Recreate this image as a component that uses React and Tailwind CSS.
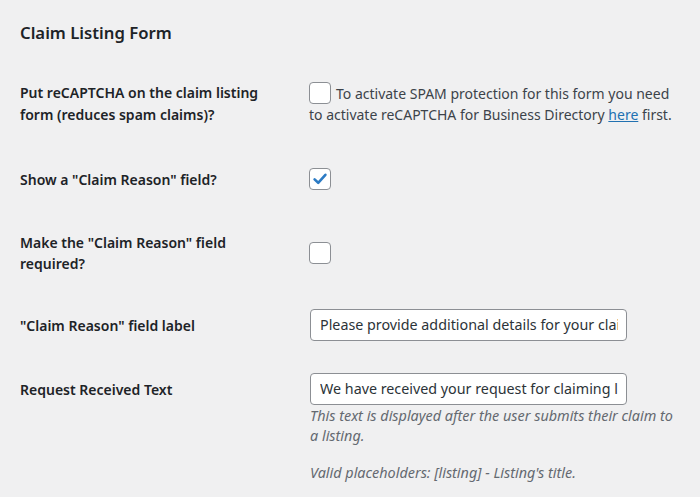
import React from "react";

const font = { fontFamily: '"Noto Sans", "Open Sans", sans-serif' };

function Box({ checked }) {
  return (
    <span className="inline-flex h-[22px] w-[22px] shrink-0 items-center justify-center rounded-[4px] border border-[#8c8f94] bg-white">
      {checked && (
        <svg width="16" height="16" viewBox="0 0 16 16">
          <path d="M2.6 8.4 L6.2 11.8 L13.4 3.8" fill="none" stroke="#2c7bc4" strokeWidth="2.6" strokeLinecap="round" strokeLinejoin="round" />
        </svg>
      )}
    </span>
  );
}

export default function App() {
  return (
    <div className="min-h-[497px] w-[700px] overflow-hidden bg-[#f0f0f1] pl-[20px] pt-[21px] text-[14px] text-[#1d2327]" style={font}>
      <h2 className="h-[24px] text-[16.7px] font-semibold leading-[24px] text-[#1d2327]">Claim Listing Form</h2>

      <div className="mt-[17px] flex h-[82px]">
        <div className="w-[280px] shrink-0 pr-[10px] pt-[20px] font-semibold leading-[21.5px] whitespace-nowrap">
          <div>Put reCAPTCHA on the claim listing</div>
          <div>form (reduces spam claims)?</div>
        </div>
        <div className="flex-1 pl-[9px] pt-[20px] text-[#3c434a] whitespace-nowrap">
          <div className="flex h-[22px] items-center gap-[5px]">
            <Box />
            <span>To activate SPAM protection for this form you need</span>
          </div>
          <div className="leading-[22px]">
            to activate reCAPTCHA for Business Directory{" "}
            <a className="text-[#2271b1] underline">here</a> first.
          </div>
        </div>
      </div>

      <div className="flex h-[68px]">
        <div className="w-[280px] shrink-0 pr-[10px] pt-[25px] font-semibold leading-[21px] whitespace-nowrap">
          Show a "Claim Reason" field?
        </div>
        <div className="flex-1 pl-[9px] pt-[24px]">
          <Box checked />
        </div>
      </div>

      <div className="flex h-[82px]">
        <div className="w-[280px] shrink-0 pr-[10px] pt-[20px] font-semibold leading-[21px] whitespace-nowrap">
          <div>Make the "Claim Reason" field</div>
          <div>required?</div>
        </div>
        <div className="flex-1 pl-[9px] pt-[30px]">
          <Box />
        </div>
      </div>

      <div className="flex h-[64px]">
        <div className="w-[280px] shrink-0 pr-[10px] pt-[21px] font-semibold leading-[21px] whitespace-nowrap">
          "Claim Reason" field label
        </div>
        <div className="flex-1 pl-[10px] pt-[15px]">
          <div className="flex h-[32px] w-[317px] items-center overflow-hidden rounded-[4px] border border-[#8c8f94] bg-white pl-[9px] pr-[8px] text-[14.3px] text-[#2c3338] whitespace-nowrap">
            <span className="block overflow-hidden">Please provide additional details for your claim</span>
          </div>
        </div>
      </div>

      <div className="flex">
        <div className="w-[280px] shrink-0 pr-[10px] pt-[21px] font-semibold leading-[21px] whitespace-nowrap">
          Request Received Text
        </div>
        <div className="flex-1 pl-[10px] pt-[15px]">
          <div className="flex h-[32px] w-[317px] items-center overflow-hidden rounded-[4px] border border-[#8c8f94] bg-white pl-[9px] pr-[8px] text-[14.3px] text-[#2c3338] whitespace-nowrap">
            <span className="block overflow-hidden">We have received your request for claiming listing</span>
          </div>
          <div className="mt-[1px] text-[14.4px] italic leading-[19.5px] text-[#646970] whitespace-nowrap">
            <div>This text is displayed after the user submits their claim to</div>
            <div>a listing.</div>
            <div className="mt-[18px]">Valid placeholders: [listing] - Listing's title.</div>
          </div>
        </div>
      </div>
    </div>
  );
}
